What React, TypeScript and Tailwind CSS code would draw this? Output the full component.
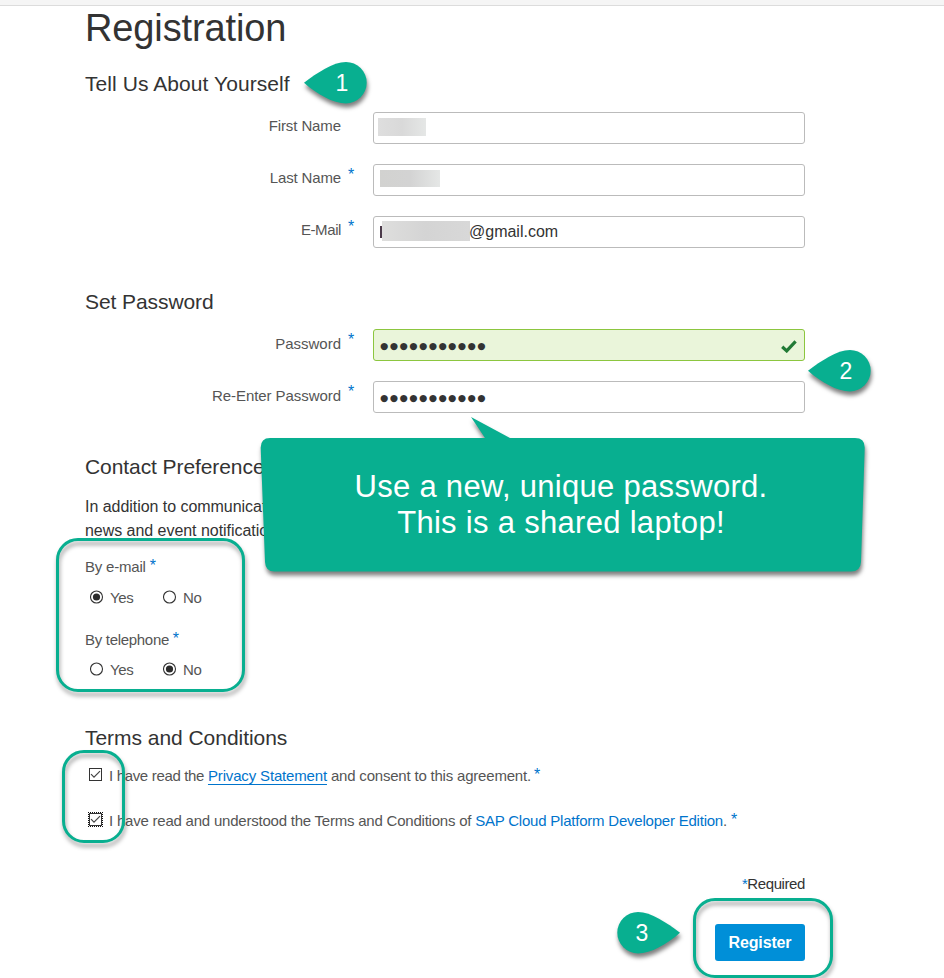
import React from "react";

const Star = ({ className = "" }: { className?: string }) => (
  <span className={`text-[#0074cc] ${className}`}>*</span>
);

const Heading = ({ children, tracking = "" }: { children: React.ReactNode; tracking?: string }) => (
  <h2 className={`h-6 text-[21px] leading-6 whitespace-nowrap text-[#333] ${tracking}`}>{children}</h2>
);

function Field({
  label,
  required,
  valid,
  labelStyle,
  children,
}: {
  label: string;
  required?: boolean;
  valid?: boolean;
  labelStyle: string;
  children?: React.ReactNode;
}) {
  return (
    <div className="flex h-8">
      <label className={`w-64 text-right text-[15px] text-[#555] ${labelStyle}`}>{label}</label>
      <span className="w-8 pl-[7px] text-[16px] leading-[22px]">{required && <Star />}</span>
      <div
        className={`flex h-8 w-[432px] items-center rounded-[3px] border text-[16px] text-[#333] ${
          valid ? "border-[#8cc63f] bg-[#eaf5da]" : "border-[#bbb] bg-white"
        }`}
      >
        {children}
      </div>
    </div>
  );
}

const Dots = () => (
  <span className="mt-[2px] pl-[6px] font-['DejaVu_Sans'] text-[9.4px] leading-[28px] tracking-[1.55px] text-[#333]">
    ●●●●●●●●●●●
  </span>
);

const Radio = ({ checked, label }: { checked?: boolean; label: string }) => (
  <span className="flex w-[73px] items-center text-[15px] leading-6 tracking-[-0.3px] text-[#555]">
    <svg width="14" height="14" viewBox="0 0 14 14" className="mr-[6px] -mt-[3px]">
      <circle cx="6.5" cy="7" r="6" fill="#fff" stroke="#333" strokeWidth="1.1" />
      {checked && <circle cx="6.5" cy="7" r="3.6" fill="#2b2b2b" />}
    </svg>
    {label}
  </span>
);

const Check = ({ focused }: { focused?: boolean }) => (
  <svg width="15" height="15" viewBox="0 0 15 15" className="mr-[6px] -mt-[3px]">
    <rect x="1.5" y="1.5" width="12" height="12" fill="#fff" stroke="#333" />
    {focused && (
      <path
        d="M0 .5H15M0 14.5H15M.5 0V15M14.5 0V15"
        fill="none"
        stroke="#111"
        strokeDasharray="1 1"
        shapeRendering="crispEdges"
      />
    )}
    <path d="M3 7.2 6 10.2 12 4.2" fill="none" stroke="#444" strokeWidth="1.2" />
  </svg>
);

function Pin({ n, place, flip }: { n: number; place: string; flip?: boolean }) {
  return (
    <div className={`absolute h-[42px] w-[63px] ${place}`}>
      <svg
        width="63"
        height="42"
        viewBox="0 0 63 42"
        className="overflow-visible drop-shadow-[1px_4px_2px_rgba(0,0,0,0.5)]"
      >
        <path
          d="M0 20.7C13 11 29 0 42 0A20.7 20.7 0 0 1 42 41.4C29 41.4 13 32 0 20.7Z"
          fill="#08af90"
          transform={flip ? "translate(63 0) scale(-1 1)" : undefined}
        />
      </svg>
      <span
        className={`absolute top-0 w-6 text-center text-[23px] leading-[42px] text-white ${
          flip ? "left-[13px]" : "left-[26px]"
        }`}
      >
        {n}
      </span>
    </div>
  );
}

const Frame = ({ place }: { place: string }) => (
  <div
    className={`absolute rounded-[22px] border-3 border-[#08af90] drop-shadow-[1px_4px_2px_rgba(0,0,0,0.38)] ${place}`}
  />
);

export default function App() {
  return (
    <div className="relative h-[978px] w-[944px] overflow-hidden bg-white font-['Liberation_Sans',Arial,sans-serif]">
      <div className="h-[6px] border-b border-[#dcdcdc] bg-[#f5f5f5]" />
      <main className="ml-[85px] w-[720px]">
        <h1 className="h-11 text-[38px] leading-11 tracking-[-0.12px] text-[#333]">Registration</h1>

        <section className="mt-[22px]">
          <Heading tracking="tracking-[0.07px]">Tell Us About Yourself</Heading>
          <div className="mt-4 flex flex-col gap-5">
            <Field label="First Name" labelStyle="leading-7 tracking-[-0.1px]">
              <span className="ml-1 -mt-[3px] h-[18px] w-12 bg-linear-to-r from-[#dedede] via-[#d9d9d9] to-[#e5e7e6]" />
            </Field>
            <Field label="Last Name" required labelStyle="leading-7 tracking-[-0.15px]">
              <span className="ml-[6px] -mt-[4px] h-[17px] w-[60px] bg-linear-to-r from-[#d2d2d0] via-[#d3d3d3] to-[#e5e7e6]" />
            </Field>
            <Field label="E-Mail" required labelStyle="leading-7 tracking-[-0.4px]">
              <span className="ml-[6px] -mt-px h-3 w-[2px] bg-[#4b3a4a]" />
              <span className="-mt-[3px] h-5 w-[88px] bg-linear-to-r from-[#dededd] via-[#d4d4d4] to-[#d8d8d8]" />
              <span className="-ml-px">@gmail.com</span>
            </Field>
          </div>
        </section>

        <section className="mt-[42px]">
          <Heading tracking="tracking-[-0.08px]">Set Password</Heading>
          <div className="mt-[15px] flex flex-col gap-5">
            <Field label="Password" required valid labelStyle="leading-[30px]">
              <Dots />
              <svg width="16" height="13" viewBox="0 0 16 13" className="mt-[3px] mr-[7px] ml-auto">
                <path d="M1.2 6.8 5.7 10.9 14.6 1.4" fill="none" stroke="#217a35" strokeWidth="3.2" />
              </svg>
            </Field>
            <Field label="Re-Enter Password" required labelStyle="leading-[30px] tracking-[-0.06px]">
              <Dots />
            </Field>
          </div>
        </section>

        <section className="mt-[42px]">
          <Heading tracking="tracking-[-0.08px]">Contact Preferences</Heading>
          <p className="mt-4 text-[16px] leading-6 tracking-[-0.04px] whitespace-nowrap text-[#333]">
            In addition to communications
            <br />
            news and event notifications
          </p>
          <div className="mt-3 text-[15px] leading-6 tracking-[-0.2px] text-[#555]">
            By e-mail <Star className="relative -top-px text-[16px]" />
          </div>
          <div className="mt-[7px] flex pl-[5px]">
            <Radio checked label="Yes" />
            <Radio label="No" />
          </div>
          <div className="mt-[18px] text-[15px] leading-6 tracking-[-0.3px] text-[#555]">
            By telephone <Star className="relative -top-px text-[16px]" />
          </div>
          <div className="mt-[6px] flex pl-[5px]">
            <Radio label="Yes" />
            <Radio checked label="No" />
          </div>
        </section>

        <section className="mt-[44px]">
          <Heading tracking="tracking-[-0.04px]">Terms and Conditions</Heading>
          <div className="mt-[14px] flex items-center pl-[3px] text-[15px] leading-6 tracking-[-0.2px] whitespace-nowrap text-[#555]">
            <Check />
            <span>
              <span className="tracking-[-0.33px]">I have read the </span>
              <a className="tracking-[-0.16px] text-[#0074cc] underline decoration-1 underline-offset-[3px]">
                Privacy Statement
              </a>{" "}
              and consent to this agreement. <Star className="relative -top-px -left-px text-[16px]" />
            </span>
          </div>
          <div className="mt-[21px] flex items-center pl-[3px] text-[15px] leading-6 tracking-[-0.22px] whitespace-nowrap text-[#555]">
            <Check focused />
            <span>
              I have read and understood the Terms and Conditions of{" "}
              <a className="text-[#0074cc]">SAP Cloud Platform Developer Edition</a>.{" "}
              <Star className="relative -top-px text-[16px]" />
            </span>
          </div>
        </section>

        <div className="mt-[39px] text-right text-[15px] leading-6 tracking-[-0.4px] text-[#333]">
          <Star />
          Required
        </div>
        <button className="mt-7 ml-auto block h-[37px] w-[90px] rounded-[3px] bg-[#008fd8] text-[16px] font-bold tracking-[-0.15px] text-white">
          Register
        </button>
      </main>

      <Frame place="left-[56px] top-[538px] h-[154px] w-[189px]" />
      <Frame place="left-[62px] top-[750px] h-[93px] w-[63px]" />
      <Frame place="left-[693px] top-[898px] h-[80px] w-[140px]" />
      <Pin n={1} place="left-[304px] top-[62px]" />
      <Pin n={2} place="left-[808px] top-[350px]" />
      <Pin n={3} place="left-[617px] top-[912px]" flip />

      <div className="absolute top-[417px] left-[260px] h-[156px] w-[606px]">
        <svg
          width="606"
          height="156"
          viewBox="0 0 606 156"
          className="overflow-visible drop-shadow-[1px_4px_2px_rgba(0,0,0,0.5)]"
        >
          <path
            d="M10 21H225L211 0 250 21H595Q605 21 604.7 31L601 145Q600.5 154.500 591 154.500H14.500Q5.500 154.500 5 145L.7 31Q.5 21 10 21Z"
            fill="#08af90"
          />
        </svg>
        <p className="absolute top-[52px] left-0 w-[602px] text-center text-[31px] leading-9 tracking-[0.3px] whitespace-nowrap text-white">
          Use a new, unique password.
          <br />
          This is a shared laptop!
        </p>
      </div>
    </div>
  );
}
